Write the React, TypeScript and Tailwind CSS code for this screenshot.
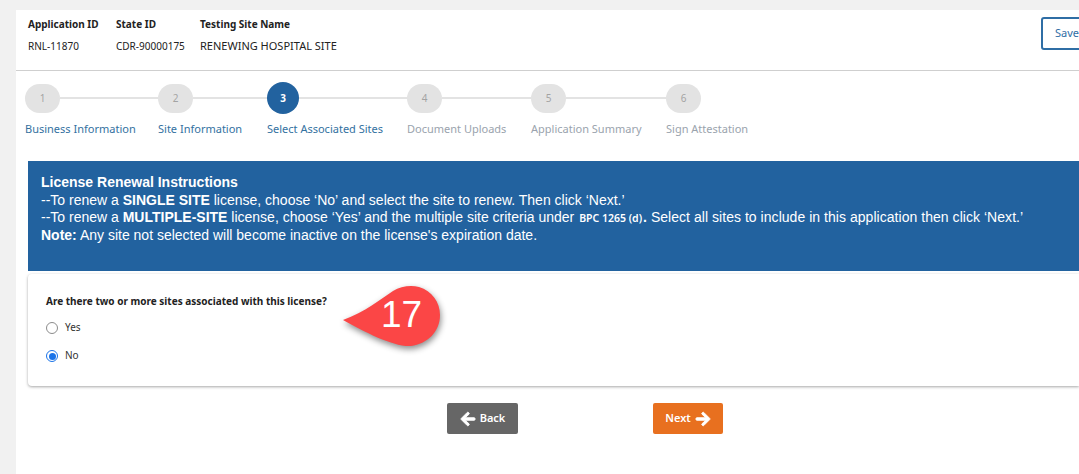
import { FaArrowLeft, FaArrowRight } from "react-icons/fa";

const steps = [
  { n: 1, label: "Business Information", w: "w-[133px]", state: "done" },
  { n: 2, label: "Site Information", w: "w-[109px]", state: "done" },
  { n: 3, label: "Select Associated Sites", w: "w-[140px]", state: "active" },
  { n: 4, label: "Document Uploads", w: "w-[124px]", state: "todo" },
  { n: 5, label: "Application Summary", w: "w-[135px]", state: "todo" },
  { n: 6, label: "Sign Attestation", w: "w-[100px]", state: "last" },
];

function Step({ n, label, w, state }: { n: number; label: string; w: string; state: string }) {
  const active = state === "active";
  const dim = state === "todo" || state === "last";
  return (
    <div className={`${w} shrink-0`}>
      <div className="flex h-[32px] items-center">
        {active ? (
          <div className="flex h-[32px] w-[32px] shrink-0 items-center justify-center rounded-full bg-[#22629f] text-[10px] font-bold text-white">
            {n}
          </div>
        ) : (
          <div className="flex h-[29px] w-[35px] shrink-0 items-center justify-center rounded-full bg-[#e3e3e3] text-[10px] text-[#a3a3a3]">
            {n}
          </div>
        )}
        {state !== "last" && <div className="h-[2px] flex-1 bg-[#e3e3e3]" />}
      </div>
      <div className={`mt-[7px] whitespace-nowrap text-[11px] leading-[16px] ${dim ? "text-[#9aa3ad]" : "text-[#33719f]"}`}>
        {label}
      </div>
    </div>
  );
}

function Radio({ label, checked }: { label: string; checked?: boolean }) {
  return (
    <div className="flex items-start gap-[7px]">
      <span
        className={`mt-[2px] flex h-[12px] w-[12px] items-center justify-center rounded-full border bg-white ${
          checked ? "border-[#1a73e8]" : "border-[#8c8c8c]"
        }`}
      >
        {checked && <span className="h-[7px] w-[7px] rounded-full bg-[#1a73e8]" />}
      </span>
      <span className="text-[10px] leading-[14px] text-[#333]">{label}</span>
    </div>
  );
}

export default function App() {
  return (
    <div className="h-[474px] w-full overflow-hidden bg-[#f1f1f1] pl-[16px] pt-[10px] font-['Noto_Sans',sans-serif]">
      <div className="h-[464px] bg-white">
        <div className="flex h-[61px] justify-between border-b border-[#cfcfcf] pl-[12px] pt-[7px]">
          <div className="flex text-[10px] leading-[14px] text-[#222]">
            <div className="w-[88px]">
              <div className="font-bold">Application ID</div>
              <div className="mt-[8px]">RNL-11870</div>
            </div>
            <div className="w-[84px]">
              <div className="font-bold">State ID</div>
              <div className="mt-[8px]">CDR-90000175</div>
            </div>
            <div>
              <div className="font-bold">Testing Site Name</div>
              <div className="mt-[8px] text-[11px]">RENEWING HOSPITAL SITE</div>
            </div>
          </div>
          <button className="-mr-[40px] h-[33px] w-[78px] rounded-[3px] border-2 border-[#2f6ea5] pl-[12px] text-left text-[11px] text-[#2f6ea5]">
            Save Draft
          </button>
        </div>

        <div className="flex pl-[9px] pt-[11px]">
          {steps.map((s) => (
            <Step key={s.n} {...s} />
          ))}
        </div>

        <div className="relative ml-[12px] mt-[24px]">
          <div className="h-[110px] bg-[#22629f] pl-[13px] pt-[13px] font-['Liberation_Sans',sans-serif] text-[14px] leading-[17px] text-white">
            <div className="mb-[1px] font-bold">License Renewal Instructions</div>
            <div className="whitespace-nowrap">
              --To renew a <b>SINGLE SITE</b> license, choose ‘No’ and select the site to renew. Then click ‘Next.’
            </div>
            <div className="whitespace-nowrap">
              --To renew a <b>MULTIPLE-SITE</b> license, choose ‘Yes’ and the multiple site criteria under{" "}
              <span className="mx-[1px] font-['Noto_Sans',sans-serif] text-[10.5px] font-semibold">BPC 1265 (d)</span>
              <b>.</b> <span className="tracking-[0.04px]">Select all sites to include in this application then click ‘Next.’</span>
            </div>
            <div className="whitespace-nowrap">
              <b>Note:</b> Any site not selected will become inactive on the license's expiration date.
            </div>
          </div>

          <div className="mt-[3px] h-[112px] rounded-l-[4px] bg-white pl-[18px] pt-[20px] shadow-[0_1px_3px_rgba(0,0,0,0.35)]">
            <div className="text-[10px] font-bold leading-[14px] text-[#222]">
              Are there two or more sites associated with this license?
            </div>
            <div className="mt-[12px] flex flex-col gap-[14px]">
              <Radio label="Yes" />
              <Radio label="No" checked />
            </div>
          </div>

          {/* numbered callout over the card */}
          <div className="absolute left-[315px] top-[124px] h-[64px] w-[100px]">
            <svg width="100" height="70" viewBox="0 0 100 70" className="drop-shadow-[1px_3px_3px_rgba(0,0,0,0.45)]">
              <path
                d="M0 35 C 22 27 38 14 50 6 C 58 1 68 0 76 2 C 89 6 97 17 97 30 C 97 47 84 59 68 61 C 50 62 22 47 0 35 Z"
                fill="#fb4646"
              />
            </svg>
            <div className="absolute left-[38px] top-[10px] font-['Liberation_Sans',sans-serif] text-[37px] leading-[40px] text-white">
              17
            </div>
          </div>
        </div>

        <div className="mt-[17px] flex pl-[431px]">
          <button className="flex h-[31px] w-[71px] items-center justify-center gap-[4px] rounded-[2px] bg-[#666] text-[11px] font-semibold text-white">
            <FaArrowLeft size={16} stroke="currentColor" strokeWidth={30} />
            Back
          </button>
          <button className="ml-[135px] flex h-[31px] w-[70px] items-center justify-center gap-[4px] rounded-[2px] bg-[#e8701f] text-[11px] font-semibold text-white">
            Next
            <FaArrowRight size={16} stroke="currentColor" strokeWidth={30} />
          </button>
        </div>
      </div>
    </div>
  );
}
